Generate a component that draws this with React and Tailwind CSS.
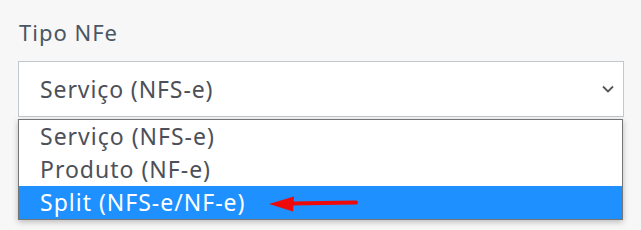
import React from 'react';

const font = { fontFamily: '"Noto Sans", "Open Sans", sans-serif' };

const options = ['Serviço (NFS-e)', 'Produto (NF-e)', 'Split (NFS-e/NF-e)'];

export default function App() {
  const selected = 2;

  return (
    <div className="w-[641px] h-[230px] bg-[#f7f7f7] overflow-hidden" style={font}>
      <div className="pl-[18px] pr-[17px] pt-[17px]">
        {/* Label */}
        <label className="block text-[22px] leading-[30px] tracking-[1px] text-[#4a5663] mb-[14px] pl-px">Tipo NFe</label>

        {/* Select */}
        <div className="relative">
          <div className="h-[56px] bg-white border border-[#c3c8cd] flex items-center justify-between pl-[21px] pr-[9px]">
            <span className="text-[23px] tracking-[0.9px] text-[#4d5059]">Serviço (NFS-e)</span>
            <svg width="14" height="10" viewBox="0 0 14 10" className="mr-[-1px]">
              <path d="M2 2.5 L7 7.5 L12 2.5" fill="none" stroke="#555" strokeWidth="1.8" />
            </svg>
          </div>

          {/* Open dropdown list */}
          <ul className="absolute left-0 right-px top-[58px] bg-white border border-[#767676] shadow-[0_2px_6px_rgba(0,0,0,0.25)]">
            {options.map((opt, i) => (
              <li
                key={opt}
                className={`h-[33px] flex items-center pl-[21px] text-[23px] tracking-[1px] ${
                  i === selected ? 'bg-[#1e90ff] text-white' : 'text-[#4d5059]'
                }`}
              >
                {opt}
                {i === selected && (
                  <svg width="92" height="18" viewBox="0 0 92 18" className="ml-[22px] mt-[3px]">
                    <path d="M22 8.5 L88 7.5" stroke="#ee0a0a" strokeWidth="4" strokeLinecap="round" />
                    <path d="M1 9 L26 1.5 L25 16.5 Z" fill="#ee0a0a" />
                  </svg>
                )}
              </li>
            ))}
          </ul>
        </div>
      </div>
    </div>
  );
}
